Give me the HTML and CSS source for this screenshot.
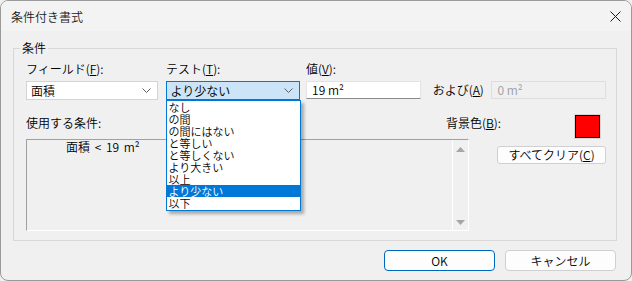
FILE: index.html
```html
<!DOCTYPE html>
<html lang="ja">
<head>
<meta charset="utf-8">
<title>条件付き書式</title>
<link rel="stylesheet" href="styles.css">
</head>
<body>
<div class="window">
  <div class="titlebar">
    <span class="title">条件付き書式</span>
    <svg class="close" width="11" height="11" viewBox="0 0 11 11"><path d="M0.5 0.5 L10.5 10.5 M10.5 0.5 L0.5 10.5" stroke="#1a1a1a" stroke-width="1" fill="none"/></svg>
  </div>
  <fieldset class="group">
    <legend class="legend">条件</legend>
    <div class="group-inner">
      <div class="row labels">
        <span class="lbl w-field">フィールド(<u>F</u>):</span>
        <span class="lbl w-test">テスト(<u>T</u>):</span>
        <span class="lbl">値(<u>V</u>):</span>
      </div>
      <div class="row controls">
        <div class="combo combo-field"><span>面積</span><svg class="chev" width="9" height="5" viewBox="0 0 9 5"><path d="M0.5 0.5 L4.5 4.5 L8.5 0.5" stroke="#606060" fill="none"/></svg></div>
        <div class="combo combo-test"><span>より少ない</span><svg class="chev" width="9" height="5" viewBox="0 0 9 5"><path d="M0.5 0.5 L4.5 4.5 L8.5 0.5" stroke="#606060" fill="none"/></svg>
          <ul class="droplist">
            <li>なし</li>
            <li>の間</li>
            <li>の間にはない</li>
            <li>と等しい</li>
            <li>と等しくない</li>
            <li>より大きい</li>
            <li>以上</li>
            <li class="sel">より少ない</li>
            <li>以下</li>
          </ul>
        </div>
        <div class="edit edit-value">19 m²</div>
        <span class="lbl and">および(<u>A</u>)</span>
        <div class="edit edit-disabled">0 m²</div>
      </div>
      <div class="row rowc">
        <span class="lbl w-use">使用する条件:</span>
        <span class="lbl">背景色(<u>B</u>):</span>
        <div class="swatch"><div class="swatch-fill"></div></div>
      </div>
      <div class="row rowd">
        <div class="preview">
          <div class="preview-text">面積 &lt; 19 m²</div>
          <div class="scroll">
            <svg width="9" height="5" viewBox="0 0 9 5"><path d="M0 5 L4.5 0 L9 5 Z" fill="#a6a6a6"/></svg>
            <svg width="9" height="5" viewBox="0 0 9 5"><path d="M0 0 L4.5 5 L9 0 Z" fill="#a6a6a6"/></svg>
          </div>
        </div>
        <button class="btn btn-clear">すべてクリア(<u>C</u>)</button>
      </div>
    </div>
  </fieldset>
  <div class="footer">
    <button class="btn btn-ok">OK</button>
    <button class="btn btn-cancel">キャンセル</button>
  </div>
</div>
</body>
</html>
```
FILE: styles.css
```css
* { box-sizing: border-box; }
html, body { margin: 0; padding: 0; background: #f0f0f0; }
body {
  font-family: "Noto Sans CJK JP", "Noto Sans", sans-serif;
  font-size: 12px;
  font-weight: 350;
  color: #000;
}
.window {
  width: 632px;
  height: 281px;
  border: 1px solid #9a9a9a;
  border-radius: 8px;
  background: #f0f0f0;
  overflow: hidden;
}
.titlebar {
  height: 30px;
  background: #f3f3f3;
  display: flex;
  align-items: center;
  justify-content: space-between;
  padding: 0 10px 0 10px;
}
.title { font-size: 12px; line-height: 14px; padding-top: 1px; color: #1a1a1a; }
.close { display: block; margin-top: 1px; }

.group {
  margin: 10px 14px 0 12px;
  padding: 0;
  border: 1px solid #d8d8d8;
  height: 200px;
  min-width: 0;
}
.legend {
  margin-left: 6px;
  padding: 0 2px;
  line-height: 14px;
  font-size: 12px;
}
.group-inner {
  padding: 6px 10px 0 12px;
}
.row { display: flex; align-items: flex-start; }
.lbl { line-height: 16px; white-space: nowrap; }
u { text-decoration: underline; text-underline-offset: 1px; }
.labels { height: 16px; }
.w-field { width: 140px; }
.w-test { width: 140px; }

.controls { margin-top: 4px; height: 19px; }
.combo {
  position: relative;
  height: 19px;
  display: flex;
  align-items: center;
  justify-content: space-between;
  padding: 0 6px 0 4px;
  line-height: 16px;
}
.combo-field {
  width: 132px;
  background: #fff;
  border: 1px solid #d4d4d4;
  margin-right: 8px;
}
.combo-test {
  width: 135px;
  background: #cce4f7;
  border: 1px solid #0078d4;
  margin-right: 6px;
}
.chev { display: block; }
.droplist {
  position: absolute;
  left: -1px;
  top: 18px;
  width: 135px;
  margin: 0;
  padding: 0 0 1px 0;
  list-style: none;
  background: #fff;
  border: 1px solid #0078d4;
  box-shadow: 3px 3px 3px rgba(0, 0, 0, 0.3);
  z-index: 5;
}
.droplist li {
  height: 12px;
  line-height: 12px;
  font-size: 11px;
  padding-left: 2px;
  white-space: nowrap;
}
.droplist li.sel { background: #0078d7; color: #fff; }

.edit {
  height: 18px;
  width: 115px;
  line-height: 16px;
  padding: 0 5px;
}
.edit-value {
  background: #fff;
  border: 1px solid #e3e3e3;
  border-bottom-color: #8a8a8a;
}
.and { margin-left: 12px; width: 59px; line-height: 18px; }
.edit-disabled {
  background: #f0f0f0;
  border: 1px solid #dedede;
  color: #9c9c9c;
}

.rowc { margin-top: 14px; height: 25px; }
.rowc .lbl { margin-top: 1px; }
.w-use { width: 420px; }
.swatch {
  margin-left: auto;
  margin-right: 5px;
  width: 27px;
  height: 25px;
  border: 1px solid #d6d6d6;
}
.swatch-fill {
  width: 100%;
  height: 100%;
  background: #ff0000;
  border: 1px solid #000;
}

.rowd { height: 92px; }
.preview {
  width: 443px;
  height: 92px;
  display: flex;
  border-top: 1px solid #a0a0a0;
  border-left: 1px solid #a0a0a0;
  border-right: 1px solid #fff;
  border-bottom: 1px solid #fff;
}
.preview-text {
  flex: 1;
  padding-left: 39px;
  line-height: 13px;
  word-spacing: 2px;
}
.scroll {
  width: 16px;
  border-left: 1px solid #fff;
  display: flex;
  flex-direction: column;
  align-items: center;
  justify-content: space-between;
  padding: 7px 0 5px 0;
}
.scroll svg { display: block; }

.btn {
  font-family: inherit;
  font-size: 12px;
  font-weight: 350;
  line-height: 16px;
  background: #fdfdfd;
  border: 1px solid #d0d0d0;
  border-radius: 4px;
  color: #000;
  padding: 0;
  margin: 0;
}
.btn-clear {
  margin-left: 28px;
  margin-top: 7px;
  width: 109px;
  height: 18px;
  border-radius: 3px;
}
.footer {
  display: flex;
  justify-content: flex-end;
  gap: 10px;
  padding-right: 15px;
  margin-top: 9px;
}
.btn-ok {
  width: 111px;
  height: 21px;
  border: 1px solid #0067c0;
}
.btn-cancel {
  width: 111px;
  height: 21px;
}
```
